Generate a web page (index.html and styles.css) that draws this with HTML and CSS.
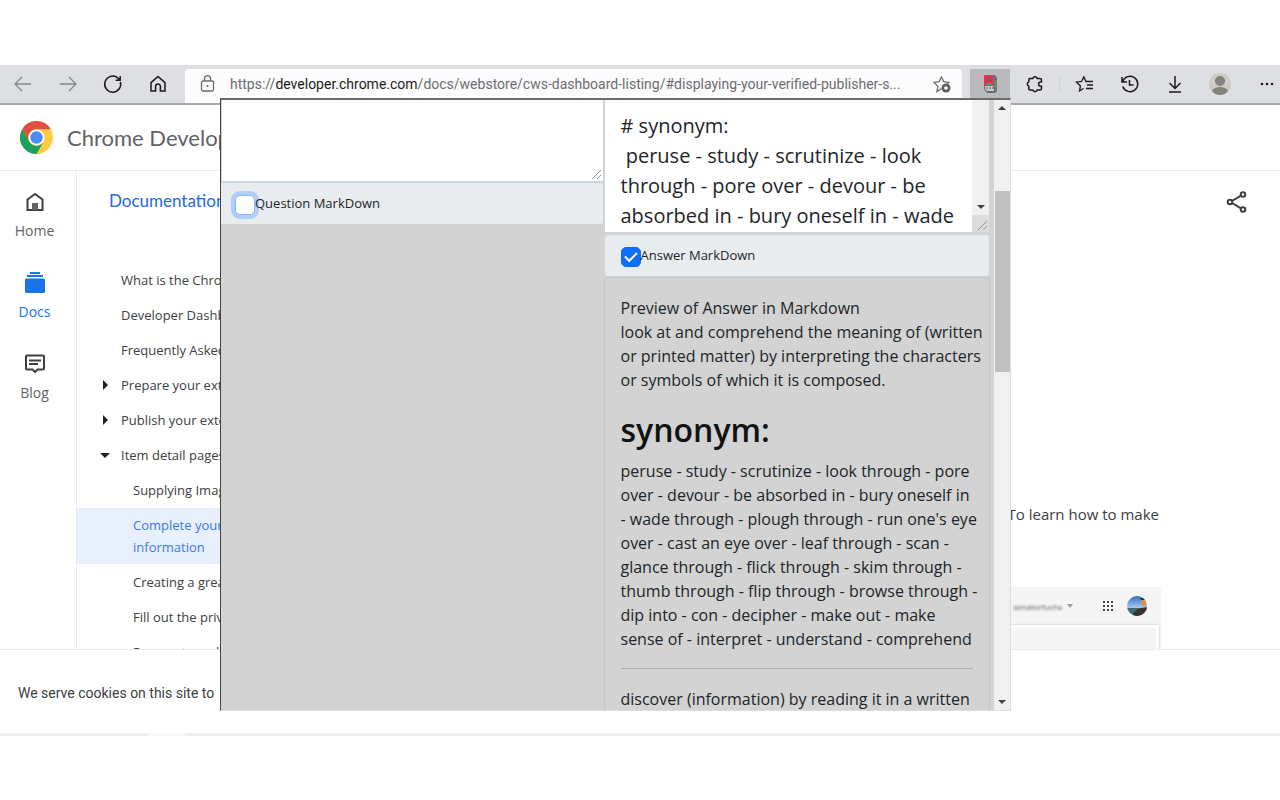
FILE: index.html
```html
<!DOCTYPE html>
<html lang="en">
<head>
<meta charset="utf-8">
<title>Chrome Developers</title>
<link rel="stylesheet" href="styles.css">
</head>
<body>
<div class="window">
  <div class="toolbar">
    <button class="tool muted" aria-label="Back"><svg width="20" height="20" viewBox="0 0 20 20"><path d="M18 10H2M9 3L2 10l7 7"/></svg></button>
    <button class="tool muted" aria-label="Forward"><svg width="20" height="20" viewBox="0 0 20 20"><path d="M2 10h16M11 3l7 7-7 7"/></svg></button>
    <button class="tool" aria-label="Reload"><svg width="20" height="20" viewBox="0 0 20 20" class="bold"><path d="M17.4 8A8 8 0 1 1 14 3.4L17 6M17.2 2v4.3h-4.6"/></svg></button>
    <button class="tool" aria-label="Home"><svg width="20" height="20" viewBox="0 0 20 20" class="bold"><path d="M3 8.6L10 2.4l7 6.2V17h-4.6v-4.5a2.4 2.4 0 0 0-4.8 0V17H3z"/></svg></button>
    <div class="address">
      <svg class="lock" width="18" height="20" viewBox="0 0 18 20"><rect x="2.500" y="7" width="12" height="10" rx="1.5"/><path d="M5.500 7V4.600a3 3 0 0 1 6 0V7"/><circle cx="8.500" cy="12" r="1" class="solid"/></svg>
      <a class="url" href="#">https://<b>developer.chrome.com</b>/docs/webstore/cws-dashboard-listing/#displaying-your-verified-publisher-s...</a>
      <button class="star" aria-label="Add to favorites"><svg width="20" height="20" viewBox="0 0 20 20"><path d="M9.500 14.500L5 17.600l.9-5.200L2 8.400l5-.7L9.500 3l2.300 4.700 5 .7-1.500 1.500"/><circle cx="14" cy="14" r="4.500" class="solid"/><path d="M14 12v4M12 14h4" stroke="#fff"/></svg></button>
    </div>
    <button class="extension" aria-label="Flashcards extension"><svg width="16" height="18" viewBox="0 0 16 18"><path d="M2 1l1-1h10l2 3v13l-2 2H5l-3-4z" fill="#6a6f74"/><path d="M2 1h9v10H2z" fill="#f02d4d"/><path d="M4 3h5M5 5h5M3 7h3" stroke="#7b5b50"/><path d="M5 8h5v2H4z" fill="#39a778"/><path d="M3 11h9v5H5l-2-2z" fill="#c7c9cc"/><path d="M5 12v2M8 12v2M11 12v2" stroke="#777"/><path d="M12 2v12" stroke="#777"/><path d="M14 5v9" stroke="#6a9d42"/></svg></button>
    <button class="tool puzzle" aria-label="Extensions"><svg width="20" height="20" viewBox="0 0 20 20" class="bold"><path d="M5 4.500h2.800a2.300 2.300 0 0 1 4.400 0H15q1.500 0 1.500 1.500v2h-.8a2.100 2.100 0 0 0 0 4.200h.8v2.300q0 1.500-1.500 1.500h-2.800a2.300 2.300 0 0 1-4.400 0H5q-1.200 0-1.200-1.300v-2.500a2.300 2.300 0 0 1 0-4.300V6Q3.800 4.500 5 4.500z"/></svg></button>
    <span class="divider"></span>
    <button class="tool" aria-label="Favorites"><svg width="20" height="20" viewBox="0 0 20 20"><path d="M8.500 14.500L4.500 17l.9-5L1.500 8.200l5-.7L8.800 3l2.200 4.500h7M12 11h6M11 14.500h7"/></svg></button>
    <button class="tool" aria-label="History"><svg width="20" height="20" viewBox="0 0 20 20" class="bold"><path d="M2.500 8.500a7.700 7.700 0 1 1 .3 4M2 3v5h5M9.500 6v5h4"/></svg></button>
    <button class="tool" aria-label="Downloads"><svg width="20" height="20" viewBox="0 0 20 20" class="bold"><path d="M10 2v12M4.500 9l5.500 5.500L15.500 9M4 18h12"/></svg></button>
    <button class="tool" aria-label="Profile"><svg width="22" height="22" viewBox="0 0 22 22"><circle cx="11" cy="11" r="11" fill="#cfccc8" stroke="none"/><circle cx="11" cy="8" r="5" fill="#85817d" stroke="none"/><path d="M3 18q2-4 8-4t8 4q-3 4-8 4t-8-4z" fill="#85817d" stroke="none"/></svg></button>
    <button class="tool more" aria-label="Settings and more"><svg width="16" height="16" viewBox="0 0 16 16"><g class="solid"><circle cx="3" cy="8" r="1.300"/><circle cx="8" cy="8" r="1.300"/><circle cx="13" cy="8" r="1.300"/></g></svg></button>
  </div>

  <header class="site-header">
    <svg width="33" height="33" viewBox="0 0 48 48"><circle cx="24" cy="24" r="24" fill="#ffcd41"/><path d="M3.200 12A24 24 0 0 1 44.800 12H24a12 12 0 0 0-10.400 18z" fill="#dd5144"/><path d="M3.200 12A24 24 0 0 0 24 48l10.400-18a12 12 0 0 1-20.800 0z" fill="#1aa15f"/><circle cx="24" cy="24" r="11.500" fill="#fff"/><circle cx="24" cy="24" r="9" fill="#4c8bf5"/></svg>
    <span class="brand">Chrome Developers</span>
  </header>

  <div class="site-body">
    <nav class="rail">
      <a href="#"><svg width="24" height="24" viewBox="0 0 24 24"><path d="M4.500 20V9.500L12 4l7.500 5.500V20z" fill="none" stroke="#3c4043" stroke-width="2"/><path d="M9 13h6v7H9z" fill="#5f6368"/></svg>Home</a>
      <a href="#" class="current"><svg width="24" height="24" viewBox="0 0 24 24" fill="#1a73e8"><path d="M7 1h10v2H7zM4 4h16v2H4z"/><rect x="2" y="7.500" width="20" height="14.500" rx="1.500"/></svg>Docs</a>
      <a href="#"><svg width="24" height="24" viewBox="0 0 24 24" fill="none" stroke="#3c4043" stroke-width="2"><path d="M4 3.500h16q1 0 1 1v12q0 1-1 1h-5.500L12 20l-2.500-2.500H4q-1 0-1-1v-12q0-1 1-1zM6 8.500h12M6 12h9"/></svg>Blog</a>
    </nav>
    <nav class="side">
      <a class="side-title" href="#">Documentation</a>
      <ul>
        <li><a href="#">What is the Chrome</a></li>
        <li><a href="#">Developer Dashboard</a></li>
        <li><a href="#">Frequently Asked</a></li>
        <li><a href="#"><i class="caret right"></i>Prepare your extension</a></li>
        <li><a href="#"><i class="caret right"></i>Publish your extension</a></li>
        <li><a href="#"><i class="caret down"></i>Item detail pages</a></li>
        <li class="nested"><a href="#">Supplying Images</a></li>
        <li class="nested active"><a href="#">Complete your<br>information</a></li>
        <li class="nested"><a href="#">Creating a great</a></li>
        <li class="nested"><a href="#">Fill out the privacy</a></li>
        <li class="nested"><a href="#">Payments and</a></li>
      </ul>
    </nav>
    <main class="article">
      <p>To learn how to make</p>
      <div class="figure">
        <div class="figure-bar">
          <span class="account">senatorfuchs</span>
          <i class="mini-caret"></i>
          <svg class="grid-icon" width="12" height="12" viewBox="0 0 12 12" fill="#44444c"><path d="M1 1h2v2H1zM5 1h2v2H5zM9 1h2v2H9zM1 5h2v2H1zM5 5h2v2H5zM9 5h2v2H9zM1 9h2v2H1zM5 9h2v2H5zM9 9h2v2H9z"/></svg>
          <svg width="20" height="20" viewBox="0 0 20 20"><defs><clipPath id="face"><circle cx="10" cy="10" r="10"/></clipPath><linearGradient id="sky" x2="0" y2="1"><stop stop-color="#2f6fc4"/><stop offset="1" stop-color="#b8d4ee"/></linearGradient></defs><g clip-path="url(#face)"><path d="M0 0h20v13H0z" fill="url(#sky)"/><path d="M0 12h20v8H0z" fill="#3f6878"/><path d="M5 20q2-8 15-9v9z" fill="#3a3133"/><path d="M14 4h5v6h-4z" fill="#e8885c"/><path d="M13 2h7v2h-6z" fill="#2c3142"/></g></svg>
        </div>
        <div class="figure-card"></div>
      </div>
    </main>
    <aside class="tools">
      <button class="share" aria-label="Share"><svg width="24" height="24" viewBox="0 0 24 24" fill="none" stroke="#3c4043" stroke-width="2"><circle cx="5" cy="12" r="2.300"/><circle cx="18" cy="4.500" r="2.300"/><circle cx="18" cy="19.500" r="2.300"/><path d="M7 11l9-5.300M7 13l9 5.300"/></svg></button>
    </aside>
  </div>

  <footer class="cookies">We serve cookies on this site to</footer>
  <div class="status"><span></span></div>

  <section class="popup">
    <div class="cards">
      <div class="column">
        <div class="field">
          <textarea class="question" aria-label="Question"></textarea>
          <svg class="grip" width="10" height="10" viewBox="0 0 10 10"><path d="M0 9l9-9M5 9l4-4"/></svg>
        </div>
        <label class="switch"><input type="checkbox" class="focused">Question MarkDown</label>
      </div>
      <div class="column">
        <div class="field answer-field">
          <textarea class="answer" aria-label="Answer"># synonym:
 peruse - study - scrutinize - look
through - pore over - devour - be
absorbed in - bury oneself in - wade</textarea>
          <div class="track"><i class="arrow down"></i></div>
          <svg class="grip" width="10" height="10" viewBox="0 0 10 10"><path d="M0 9l9-9M5 9l4-4"/></svg>
        </div>
        <label class="switch"><input type="checkbox" checked>Answer MarkDown</label>
        <div class="preview">
          <p>Preview of Answer in Markdown<br>look at and comprehend the meaning of (written<br>or printed matter) by interpreting the characters<br>or symbols of which it is composed.</p>
          <h1>synonym:</h1>
          <p>peruse - study - scrutinize - look through - pore<br>over - devour - be absorbed in - bury oneself in<br>- wade through - plough through - run one's eye<br>over - cast an eye over - leaf through - scan -<br>glance through - flick through - skim through -<br>thumb through - flip through - browse through -<br>dip into - con - decipher - make out - make<br>sense of - interpret - understand - comprehend</p>
          <hr>
          <p>discover (information) by reading it in a written</p>
        </div>
      </div>
    </div>
    <div class="scrollbar"><i class="arrow up"></i><div class="thumb"></div><i class="arrow down"></i></div>
  </section>
</div>
</body>
</html>
```
FILE: styles.css
```css
* { box-sizing: border-box; }
body {
  margin: 0;
  height: 100vh;
  padding: 65px 0 64px;
  background: #fff;
  color: #212529;
  font-family: "Open Sans", "Noto Sans", sans-serif;
  font-size: 13px;
}
button { border: 0; padding: 0; background: none; display: flex; align-items: center; justify-content: center; }
a { color: inherit; text-decoration: none; }
svg { flex: none; }

.window { position: relative; height: 100%; display: flex; flex-direction: column; overflow: hidden; }

/* Browser toolbar */
.toolbar { display: flex; align-items: stretch; height: 40px; flex: none; background: #dddfe3; border-bottom: 2px solid #a8aab0; }
.toolbar svg { fill: none; stroke: #1b1b1b; stroke-width: 1.3; }
.toolbar .extension svg { stroke: none; }
.toolbar .bold { stroke-width: 1.5; }
.toolbar .muted svg { stroke: #85868a; }
.toolbar .solid { fill: #1b1b1b; stroke: none; }
.tool { width: 45px; flex: none; }
.more { width: 27px; margin-left: 11px; }
.puzzle { margin-left: 2px; }
.divider { width: 1px; margin: 11px 2px; background: #cfd0d3; }
.address { flex: 1; min-width: 0; display: flex; align-items: center; margin: 4px 8px 0 5px; padding: 0 10px 4px 14px; background: #fcfcfd; border-radius: 4px 4px 0 0; color: #6c6d70; font-family: Roboto, sans-serif; font-size: 14px; }
.address svg { stroke: #6b6b6b; }
.address .solid { fill: #5f5f5f; }
.url { flex: 1; min-width: 0; margin-left: 13px; white-space: nowrap; }
.url b { font-weight: 400; color: #1b1b1b; }
.extension { width: 40px; flex: none; margin-top: 4px; padding-bottom: 4px; background: #b9babe; }

/* Site */
.site-header { display: flex; align-items: center; gap: 14px; height: 66px; flex: none; padding-left: 20px; border-bottom: 1px solid #e8eaed; }
.brand { font-family: Lato, sans-serif; font-size: 22px; color: #5f6368; }
.site-body { flex: 1; min-height: 0; display: flex; overflow: hidden; }
.rail { width: 77px; flex: none; padding: 19px 7px 0 0; border-right: 1px solid #e8eaed; display: flex; flex-direction: column; gap: 30px; color: #5f6368; font-size: 14px; line-height: 20px; }
.rail a { display: flex; flex-direction: column; align-items: center; gap: 7px; }
.rail .current { color: #1a73e8; }
.side { width: 300px; flex: none; }
.side-title { display: block; padding: 18px 0 0 32px; color: #1a6ae8; font-family: Lato, sans-serif; font-size: 17px; line-height: 24px; }
.side ul { list-style: none; margin: 50px 0 0; padding: 0; display: grid; gap: 1px; }
.side li { padding: 6px 0 6px 44px; line-height: 22px; color: #3c4043; white-space: nowrap; }
.side li a { display: block; position: relative; }
.side .nested { padding-left: 56px; }
.side .active { background: #e8f0fe; color: #3b78e7; }
.caret { position: absolute; border: 5px solid transparent; }
.caret.right { border-left-color: #202124; border-right-width: 0; left: -18px; top: 6px; }
.caret.down { border-top-color: #202124; border-bottom-width: 0; left: -21px; top: 9px; }
.article { flex: 1; min-width: 0; padding-top: 331px; }
.article p { margin: 0 2px 61px 0; text-align: right; font-size: 15px; line-height: 24px; color: #3c4043; }
.figure { background: #f5f5f5; }
.figure-bar { height: 38px; display: flex; align-items: center; justify-content: flex-end; padding-right: 14px; }
.account { font-size: 8px; filter: blur(1px); color: #555; }
.mini-caret { margin: 0 29px 0 5px; border: 3px solid transparent; border-top: 4px solid #999; border-bottom: 0; }
.grid-icon { margin-right: 13px; }
.figure-card { height: 60px; margin-right: 2px; border: 3px solid #fff; background: #f5f5f5; box-shadow: 0 0 2px #bbb; }
.tools { width: 119px; flex: none; padding: 19px 31px 0 0; display: flex; align-items: flex-start; justify-content: flex-end; }
.cookies { height: 84px; flex: none; padding: 32px 0 0 18px; border-top: 1px solid #e8eaed; background: #fff; font-family: Roboto, sans-serif; font-size: 14px; line-height: 22px; color: #3c4043; }
.status { height: 3px; flex: none; background: #ededed; }
.status span { display: block; width: 37px; height: 3px; margin-left: 148px; background: #f8f8f8; }

/* Extension popup */
.popup { position: absolute; top: 33px; bottom: 25px; left: 220px; right: 269px; display: flex; overflow: hidden; background: #d3d3d3; border: 1px solid #ddd; border-top: 2px solid #6b6b6d; border-left: 1px solid #444; }
.cards { flex: 1; min-width: 0; display: grid; grid-template-columns: 383fr 387fr; padding-right: 4px; }
.column { min-width: 0; display: flex; flex-direction: column; }
.field { position: relative; display: flex; flex: none; background: #fff; border: 1px solid #ced4da; border-top: 0; }
.field textarea { flex: 1; min-width: 0; border: 0; margin: 0; resize: none; outline: 0; overflow: hidden; background: #fff; color: #212529; font: 20px/30px "Open Sans", sans-serif; }
.question { height: 81px; }
.answer { height: 132px; padding: 11px 0 0 16px; }
.grip { position: absolute; right: 1px; bottom: 1px; stroke: #999; }
.answer-field { background: #dcdcdc; }
.track { width: 17px; flex: none; height: 115px; background: #f0f0f0; display: flex; align-items: flex-end; justify-content: center; padding-bottom: 6px; }
.arrow { border: 4px solid transparent; }
.arrow.up { border-bottom-color: #404040; border-top: 0; }
.arrow.down { border-top-color: #404040; border-bottom: 0; }
.switch { flex: none; display: flex; align-items: flex-start; height: 43px; padding: 9px 16px 0; border: 1px solid #ced4da; border-radius: 4px; background: #e9ecef; line-height: 22px; }
.answer-field + .switch { margin: 1px 0 0; }
.column:first-child .switch { border-left: 0; padding-left: 14px; border-radius: 0 4px 4px 0; }
.switch input { appearance: none; width: 20px; height: 20px; margin: 3px 0 0; flex: none; background: #fff; border: 1px solid #86b7fe; border-radius: 5px; }
.switch .focused { box-shadow: 0 0 0 4px #b0cdf6; }
.switch input:checked { background: #0d6efd; border-color: #0d6efd; display: flex; align-items: center; justify-content: center; }
.switch input:checked::before { content: ""; width: 10px; height: 5px; margin-bottom: 3px; border: solid #fff; border-width: 0 0 2px 2px; transform: rotate(-45deg); }
.preview { padding: 18px 16px 16px; border: 1px solid #c5c5c5; border-radius: 4px; flex: 1 0 auto; font-size: 16px; line-height: 24px; white-space: nowrap; }
.preview p { margin: 0; }
.preview h1 { margin: 17px 0 8px; font-size: 32px; line-height: 42px; font-weight: 600; color: #101214; }
.preview hr { margin: 17px 0 18px; border: 0; border-top: 1px solid #afafaf; }
.scrollbar { width: 16px; flex: none; display: flex; flex-direction: column; align-items: center; background: #f0f0f0; padding: 6px 0; }
.thumb { align-self: stretch; height: 181px; margin: 81px 0 auto 1px; background: #c0c0c0; }
```
